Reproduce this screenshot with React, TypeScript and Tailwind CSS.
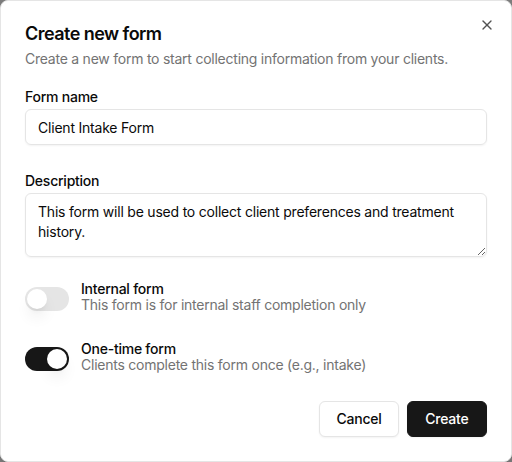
import React from "react";
import { X } from "lucide-react";

const Toggle = ({ on }: { on: boolean }) => (
  <span
    className={`mt-[6px] flex h-6 w-11 shrink-0 items-center rounded-full p-[2px] ${
      on ? "bg-[#171717]" : "bg-[#e5e5e5]"
    }`}
  >
    <span
      className={`block h-5 w-5 rounded-full bg-white shadow-lg ${
        on ? "translate-x-5" : "translate-x-0"
      }`}
    />
  </span>
);

const ToggleRow = ({ on, title, hint, className }: { on: boolean; title: string; hint: string; className: string }) => (
  <div className={`flex items-start gap-3 ${className}`}>
    <Toggle on={on} />
    <div className="flex flex-col">
      <span className="text-sm leading-4 font-medium text-[#0a0a0a]">{title}</span>
      <span className="text-sm leading-4 text-[#737373]">{hint}</span>
    </div>
  </div>
);

const App = () => {
  return (
    <div className="h-[462px] w-[512px] bg-[#7c7c7c] font-['Inter','Liberation_Sans',sans-serif] tracking-[-0.015em]">
      <div className="relative flex h-full w-full flex-col rounded-lg border border-[#e5e5e5] bg-white p-6 shadow-lg">
        <button className="absolute top-4 right-4 text-[#0a0a0a] opacity-70">
          <X size={16} />
        </button>

        <h2 className="text-[18px] leading-[18px] font-semibold tracking-[-0.03em] text-[#0a0a0a]">Create new form</h2>
        <p className="mt-[6px] text-sm leading-5 text-[#737373]">
          Create a new form to start collecting information from your clients.
        </p>

        <label className="mt-[18px] text-sm leading-5 font-medium text-[#0a0a0a]">Form name</label>
        <input
          defaultValue="Client Intake Form"
          className="mt-[2px] h-9 w-full rounded-md border border-[#e5e5e5] px-3 text-sm tracking-[-0.015em] text-[#0a0a0a] shadow-xs outline-none"
        />

        <label className="mt-[26px] text-sm leading-5 font-medium text-[#0a0a0a]">Description</label>
        <textarea
          defaultValue="This form will be used to collect client preferences and treatment history."
          className="mt-[2px] h-16 w-full rounded-md border border-[#e5e5e5] px-3 py-2 text-sm leading-5 tracking-[-0.015em] text-[#0a0a0a] shadow-xs outline-none"
        />

        <ToggleRow
          on={false}
          title="Internal form"
          hint="This form is for internal staff completion only"
          className="mt-6"
        />
        <ToggleRow
          on={true}
          title="One-time form"
          hint="Clients complete this form once (e.g., intake)"
          className="mt-7"
        />

        <div className="mt-7 flex justify-end gap-2">
          <button className="h-9 rounded-md border border-[#e5e5e5] bg-white px-4 text-sm font-medium tracking-[-0.015em] text-[#0a0a0a] shadow-xs">
            Cancel
          </button>
          <button className="h-9 rounded-md border border-[#171717] bg-[#171717] px-[17.5px] text-sm font-medium tracking-[-0.015em] text-white shadow-xs">
            Create
          </button>
        </div>
      </div>
    </div>
  );
};

export default App;
